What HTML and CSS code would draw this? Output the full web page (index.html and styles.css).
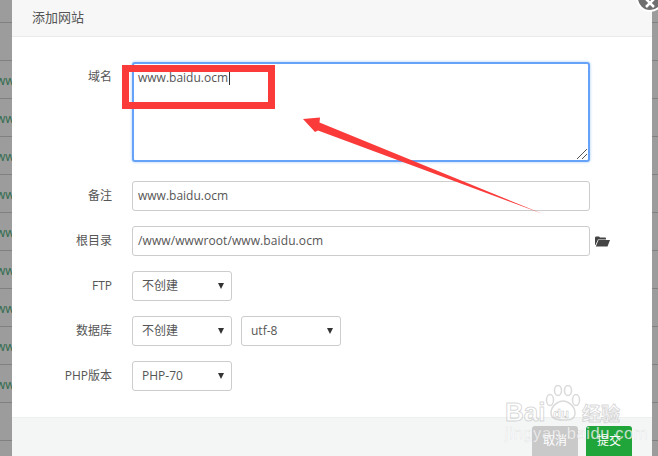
FILE: index.html
```html
<!DOCTYPE html>
<html lang="zh">
<head>
<meta charset="utf-8">
<title>添加网站</title>
<link rel="stylesheet" href="styles.css">
</head>
<body>
<div class="backdrop">
  <div class="bg-row first"></div>
  <div class="bg-row"></div>
  <div class="bg-row"><span>ww</span></div>
  <div class="bg-row"><span>ww</span></div>
  <div class="bg-row"><span>ww</span></div>
  <div class="bg-row"><span>ww</span></div>
  <div class="bg-row"><span>ww</span></div>
  <div class="bg-row"><span>ww</span></div>
  <div class="bg-row"><span>ww</span></div>
  <div class="bg-row"><span>ww</span></div>
  <div class="bg-row"><span>ww</span></div>
  <div class="bg-row"></div>
</div>

<section class="modal">
  <header class="modal-head">添加网站</header>
  <form class="modal-body">
    <div class="row row-area">
      <label class="lbl">域名</label>
      <div class="textarea focus">www.baidu.ocm<i class="caret"></i>
        <svg class="grip" width="12" height="12" viewBox="0 0 12 12"><path d="M1 11 11 1M6 11 11 6" stroke="#555" stroke-width="1" fill="none"/></svg>
      </div>
    </div>
    <div class="row">
      <label class="lbl">备注</label>
      <div class="input">www.baidu.ocm</div>
    </div>
    <div class="row">
      <label class="lbl">根目录</label>
      <div class="input path">/www/wwwroot/www.baidu.ocm</div>
      <svg class="folder" width="16" height="12" viewBox="0 0 16 12"><path d="M1 10V2.500L1.800 1.500H5L6 2.500H11.500L12 3.500V4.500H4L1.500 10ZM4.500 5H16L13.500 11.500H1.800Z" fill="#444"/></svg>
    </div>
    <div class="row">
      <label class="lbl">FTP</label>
      <div class="select">不创建<b class="tri"></b></div>
    </div>
    <div class="row">
      <label class="lbl">数据库</label>
      <div class="select">不创建<b class="tri"></b></div>
      <div class="select second">utf-8<b class="tri"></b></div>
    </div>
    <div class="row">
      <label class="lbl">PHP版本</label>
      <div class="select">PHP-70<b class="tri"></b></div>
    </div>
  </form>
  <footer class="modal-foot">
    <button class="btn cancel" type="button">取消</button>
    <button class="btn submit" type="button">提交</button>
  </footer>
</section>

<div class="close"><svg width="12" height="12" viewBox="0 0 12 12"><path d="M2 2 10 10M10 2 2 10" stroke="#fff" stroke-width="2.500"/></svg></div>

<div class="mark-box"></div>
<svg class="arrow" width="658" height="456" viewBox="0 0 658 456"><polygon points="303,119 320,117.500 319.500,122.500 543,214 318,130.500 315,132" fill="#fb3a3a"/></svg>

<div class="wm">
  <svg class="paw" width="36" height="36" viewBox="0 0 36 36"><g fill="#fff" fill-opacity=".5" stroke="#bbb" stroke-opacity=".55" stroke-width="1.500"><ellipse cx="5" cy="15" rx="3.500" ry="5.500"/><ellipse cx="13" cy="5.500" rx="3.500" ry="5"/><ellipse cx="23" cy="5.500" rx="3.500" ry="5"/><ellipse cx="31" cy="15" rx="3.500" ry="5.500"/><path d="M6 28C6 21 13 16 18 16S30 21 30 28 24 35 18 35 6 34 6 28Z"/></g></svg>
  <span class="wm-bai">Bai</span><span class="wm-du">du</span><span class="wm-cn">经验</span>
</div>
<div class="wm-url">jingyan.baidu.com</div>
</body>
</html>
```
FILE: styles.css
```css
* { box-sizing: border-box; }
html, body { margin: 0; height: 100%; }
body {
  position: relative;
  width: 658px;
  height: 456px;
  overflow: hidden;
  background: #9c9c9c;
  font-family: "Open Sans", "Noto Sans CJK SC", sans-serif;
  font-size: 12px;
  color: #555;
}
.backdrop { display: flex; flex-direction: column; }
.bg-row {
  height: 38px;
  border-bottom: 1px solid #7f8080;
  color: #2f6b4c;
  line-height: 39px;
  text-indent: -4px;
  overflow: hidden;
}
.bg-row.first { height: 23px; }
.modal {
  position: absolute;
  left: 12px;
  top: 0;
  width: 640px;
  height: 456px;
  background: #fff;
  display: flex;
  flex-direction: column;
}
.modal-head {
  height: 37px;
  padding: 0 20px;
  background: #f7f7f7;
  border-bottom: 1px solid #eaeaea;
  line-height: 34px;
  font-size: 13px;
  color: #555;
}
.modal-body {
  flex: 1;
  padding-top: 25px;
  display: flex;
  flex-direction: column;
  gap: 15px;
}
.row { display: flex; align-items: center; height: 30px; }
.row-area { height: 100px; margin-bottom: 4px; align-items: flex-start; }
.lbl {
  width: 100px;
  text-align: right;
  color: #555;
  line-height: 30px;
  margin-right: 20px;
}
.input, .textarea {
  width: 458px;
  height: 30px;
  border: 1px solid #ccc;
  border-radius: 3px;
  padding: 0 5px;
  line-height: 28px;
  color: #555;
  background: #fff;
  white-space: nowrap;
}
.path { letter-spacing: .1px; }
.textarea {
  position: relative;
  height: 100px;
  line-height: 27px;
}
.textarea.focus {
  border: 2px solid #66a3f8;
  padding-left: 4px;
  box-shadow: 0 0 3px rgba(102, 165, 245, .6);
}
.caret {
  display: inline-block;
  width: 1px;
  height: 13px;
  margin-left: 1px;
  background: #333;
  vertical-align: -3px;
}
.grip { position: absolute; right: 0; bottom: 0; }
.folder { margin-left: 4px; }
.select {
  position: relative;
  width: 100px;
  height: 30px;
  border: 1px solid #ccc;
  border-radius: 3px;
  padding-left: 9px;
  line-height: 28px;
  color: #555;
  background: #fff;
}
.select.second { margin-left: 9px; }
.tri {
  position: absolute;
  right: 7px;
  top: 11px;
  border-left: 3.500px solid transparent;
  border-right: 3.500px solid transparent;
  border-top: 6px solid #333;
}
.modal-foot {
  height: 39px;
  background: #f4f6f6;
  border-top: 1px solid #eef0f0;
  padding: 8px 20px 0 0;
  display: flex;
  justify-content: flex-end;
  gap: 8px;
}
.btn {
  width: 46px;
  height: 32px;
  border: 0;
  border-radius: 3px;
  padding: 0 0 4px;
  font: 12px "Open Sans", "Noto Sans CJK SC", sans-serif;
  color: #fff;
}
.cancel { background: #c9c9c9; }
.submit { background: #20a53a; }
.close {
  position: absolute;
  left: 636px;
  top: -16px;
  width: 28px;
  height: 28px;
  border-radius: 50%;
  background: #6f6f6f;
  border: 2px solid #fff;
  display: flex;
  align-items: center;
  justify-content: center;
  padding-top: 10px;
}
.mark-box {
  position: absolute;
  left: 122px;
  top: 65px;
  width: 153px;
  height: 44px;
  border: 7px solid #fb3a3a;
}
.arrow { position: absolute; left: 0; top: 0; }
.wm {
  position: absolute;
  left: 505px;
  top: 385px;
  width: 120px;
  height: 42px;
  color: rgba(255, 255, 255, .6);
  font-family: "Liberation Sans", sans-serif;
  font-weight: 700;
  -webkit-text-stroke: 1px rgba(170, 170, 170, .45);
}
.paw { position: absolute; left: 40px; top: 0; }
.wm-bai { position: absolute; left: 0; top: 13px; font-size: 26px; line-height: 28px; }
.wm-du { position: absolute; left: 48px; top: 22px; font-size: 13px; line-height: 14px; -webkit-text-stroke: .5px rgba(150, 150, 150, .6); }
.wm-cn { position: absolute; left: 77px; top: 16px; font: 700 19px/24px "Noto Sans CJK SC", sans-serif; }
.wm-url {
  position: absolute;
  left: 505px;
  top: 424px;
  color: rgba(255, 255, 255, .75);
  font: 16.500px/18px "Liberation Sans", sans-serif;
  letter-spacing: .6px;
  -webkit-text-stroke: .4px rgba(170, 170, 170, .35);
}
```
